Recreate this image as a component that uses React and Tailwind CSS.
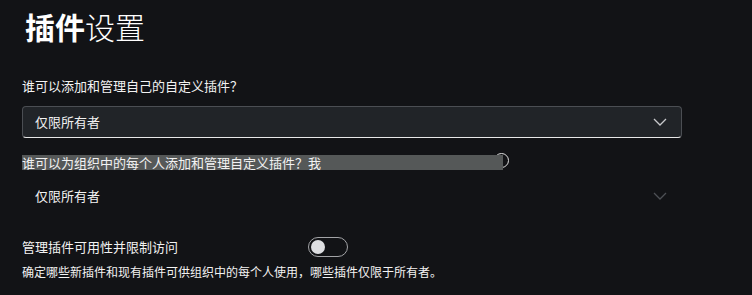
import React from 'react';

const font = { fontFamily: '"Noto Sans CJK SC", "Noto Sans", sans-serif' };

const Chevron = ({ className }) => (
  <svg className={className} width="14" height="8" viewBox="0 0 14 8" fill="none">
    <path d="M1 1l6 6 6-6" stroke="currentColor" strokeWidth="1.3" />
  </svg>
);

const App = () => {
  return (
    <div
      className="w-[752px] h-[295px] overflow-hidden bg-[#121316] text-[#f2f2f2] pl-[22px]"
      style={font}
    >
      <h1 className="mt-[6px] pl-[3px] text-[30px] leading-[40px] text-white">
        <span className="font-bold">插件</span>
        <span className="font-light">设置</span>
      </h1>

      <div className="mt-[30px] text-[13px] leading-[20px]">谁可以添加和管理自己的自定义插件？</div>

      <div className="mt-[10px] w-[660px] h-[32px] flex items-center justify-between rounded-[4px] border border-[#4b4e53] border-b-[#e8e8e8] bg-[#212428] pl-[12px] pr-[14px]">
        <span className="text-[13px]">仅限所有者</span>
        <Chevron className="text-[#c8c9cc]" />
      </div>

      <div className="mt-[14px] h-[20px] flex items-center">
        <span className="relative z-10 h-[15px] w-[481px] bg-[#555858] text-[13px] leading-[15px] whitespace-nowrap">
          谁可以为组织中的每个人添加和管理自定义插件？我
        </span>
        <span className="-ml-[9px] -mt-[3px] w-[15px] h-[15px] rounded-full border-[1.5px] border-[#e0e0e0]" />
      </div>

      <div className="mt-[8px] w-[660px] h-[32px] flex items-center justify-between pl-[13px] pr-[15px]">
        <span className="text-[13px]">仅限所有者</span>
        <Chevron className="text-[#4d5055]" />
      </div>

      <div className="mt-[25px] flex items-center">
        <span className="w-[286px] text-[13px] leading-[20px]">管理插件可用性并限制访问</span>
        <span className="w-[40px] h-[20px] rounded-full border border-[#a3a4a7] flex items-center pl-[2px]">
          <span className="w-[14px] h-[14px] rounded-full bg-[#dddee1]" />
        </span>
      </div>

      <div className="mt-[6px] text-[12px] leading-[18px]">
        确定哪些新插件和现有插件可供组织中的每个人使用，哪些插件仅限于所有者。
      </div>
    </div>
  );
};

export default App;
